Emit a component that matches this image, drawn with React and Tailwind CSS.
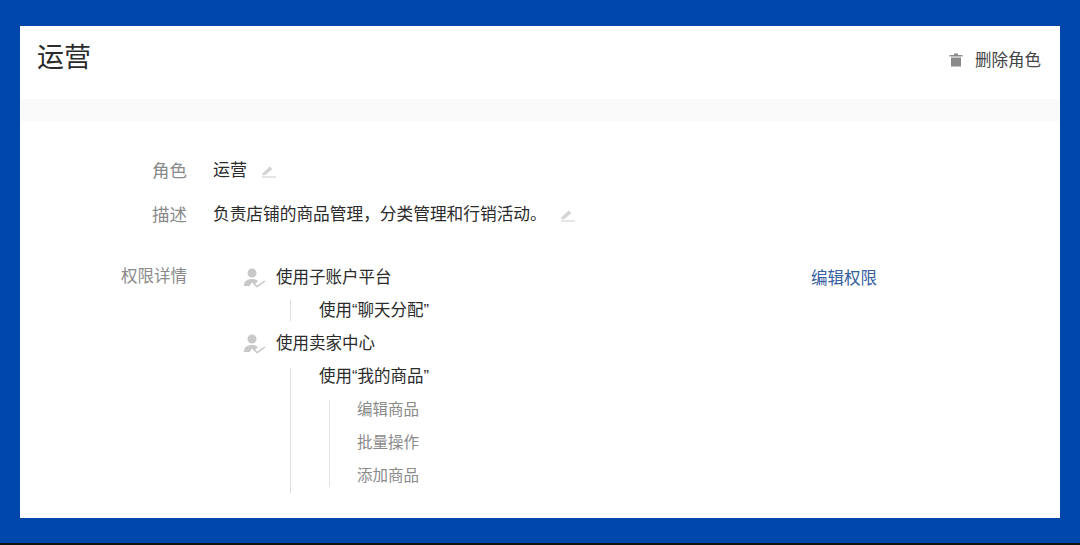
const FONT = "font-['Liberation_Sans','Noto_Sans_CJK_SC',sans-serif]";

function PenIcon() {
  return (
    <svg width="16" height="14" viewBox="0 0 16 14" className="shrink-0">
      <path d="M1.5 9.5 L8.5 2.5 L11.5 5 L4.5 11 L1.5 11.5 Z" fill="#d4d4d4" />
      <rect x="1" y="12.4" width="14" height="1.2" fill="#d4d4d4" />
    </svg>
  );
}

function TrashIcon() {
  return (
    <svg width="14" height="14" viewBox="0 0 14 14" className="shrink-0">
      <rect x="5" y="0.5" width="4" height="1.5" fill="#8a8a8a" />
      <rect x="0.5" y="2" width="13" height="1.5" fill="#8a8a8a" />
      <path d="M2 4.5 H12 V13.5 H2 Z" fill="#8a8a8a" />
    </svg>
  );
}

function UserCheckIcon() {
  return (
    <svg width="24" height="20" viewBox="0 0 24 20" className="shrink-0">
      <circle cx="9" cy="5" r="4.5" fill="#c8c8c8" />
      <path d="M1 18 C1 13 4 11 9 11 C12 11 14 12 15 13 L11.5 16.5 L9 14.5 L6.5 18 Z" fill="#c8c8c8" />
      <path d="M10.5 15.5 L14 18.5 L22 13" fill="none" stroke="#c4c4c4" strokeWidth="1.4" />
    </svg>
  );
}

function InfoRow({ label, value, className }) {
  return (
    <div className={`flex items-center ${className}`}>
      <div className="w-[167px] text-right text-[17.5px] text-[#8a8a8a]">{label}</div>
      <div className="ml-[26px] text-[#2b2b2b]">{value}</div>
    </div>
  );
}

export default function App() {
  return (
    <div className={`${FONT} flex h-[545px] w-[1080px] flex-col overflow-hidden bg-[#0047ab] text-[16.5px]`}>
      <div className="mx-5 mt-[26px] h-[492px] bg-white">
        {/* header */}
        <div className="flex h-[73px] items-start justify-between pl-[17px] pr-[19px]">
          <h1 className="mt-[13px] text-[27px] font-normal leading-[38px] text-[#2b2b2b]">运营</h1>
          <button className="mt-[22px] flex items-center text-[#444]">
            <TrashIcon />
            <span className="ml-[12px] leading-[24px]">删除角色</span>
          </button>
        </div>
        <div className="h-[22px] bg-[#f9f9f9]" />

        {/* role info */}
        <InfoRow
          label="角色"
          className="mt-[37px] h-[26px]"
          value={
            <span className="flex items-center gap-[14px] text-[17px]">
              运营 <PenIcon />
            </span>
          }
        />
        <InfoRow
          label="描述"
          className="mt-[18px] h-[26px]"
          value={
            <span className="flex items-center gap-[13px] text-[16.7px]">
              负责店铺的商品管理，分类管理和行销活动。 <PenIcon />
            </span>
          }
        />

        {/* permissions */}
        <div className="mt-[33px] flex items-start">
          <div className="mt-[2px] w-[167px] text-right leading-[26px] text-[#8a8a8a]">权限详情</div>
          <div className="ml-[56px] w-[568px] text-[#2b2b2b]">
            <div className="flex h-[33px] items-center">
              <UserCheckIcon />
              <span className="ml-[9px]">使用子账户平台</span>
            </div>
            <div className="ml-[47px] flex h-[33px] items-center">
              <div className="flex h-[21px] items-center border-l border-[#ddd] pl-[28px]">使用“聊天分配”</div>
            </div>
            <div className="flex h-[33px] items-center">
              <UserCheckIcon />
              <span className="ml-[9px]">使用卖家中心</span>
            </div>
            <div className="ml-[47px] flex">
              <div className="mt-[8px] w-px bg-[#ddd]" />
              <div className="pb-px pl-[28px]">
                <div className="flex h-[33px] items-center">使用“我的商品”</div>
                <div className="ml-[10px] flex">
                  <div className="mt-[7px] mb-[5px] w-px bg-[#e5e5e5]" />
                  <div className="pl-[27px] text-[15.5px] text-[#8a8a8a]">
                    <div className="flex h-[33px] items-center">编辑商品</div>
                    <div className="flex h-[33px] items-center">批量操作</div>
                    <div className="flex h-[33px] items-center">添加商品</div>
                  </div>
                </div>
              </div>
            </div>
          </div>
          <a className="mt-[4px] leading-[26px] text-[#35609f]">编辑权限</a>
        </div>
      </div>
      <div className="mt-auto h-[2px] bg-[#111]" />
    </div>
  );
}
